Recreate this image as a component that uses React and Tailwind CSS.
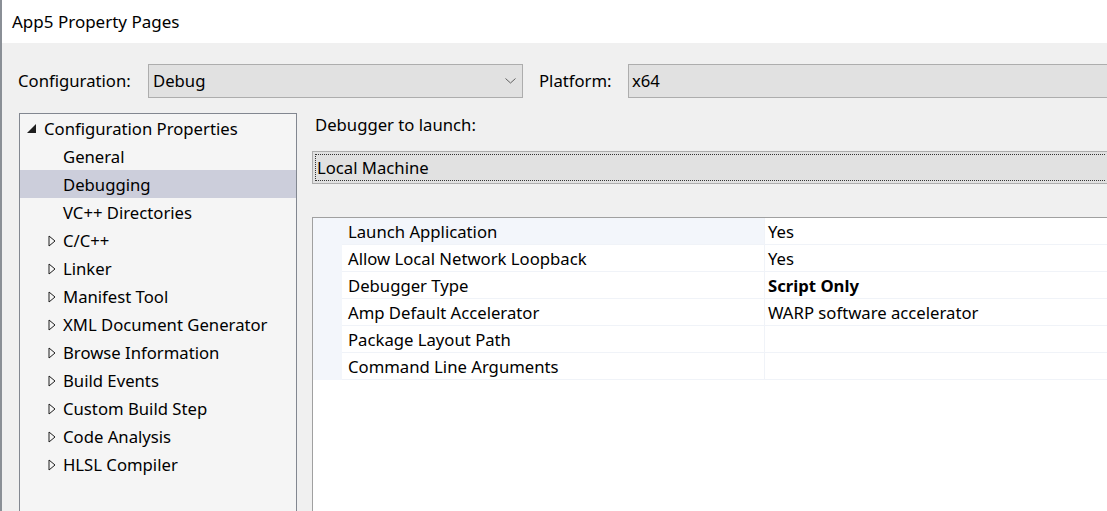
import React from "react";

const treeChildren = [
  { label: "General", leaf: true },
  { label: "Debugging", leaf: true, selected: true },
  { label: "VC++ Directories", leaf: true },
  { label: "C/C++" },
  { label: "Linker" },
  { label: "Manifest Tool" },
  { label: "XML Document Generator" },
  { label: "Browse Information" },
  { label: "Build Events" },
  { label: "Custom Build Step" },
  { label: "Code Analysis" },
  { label: "HLSL Compiler" },
];

const props = [
  { name: "Launch Application", value: "Yes", active: true },
  { name: "Allow Local Network Loopback", value: "Yes" },
  { name: "Debugger Type", value: "Script Only", bold: true },
  { name: "Amp Default Accelerator", value: "WARP software accelerator" },
  { name: "Package Layout Path", value: "" },
  { name: "Command Line Arguments", value: "" },
];

const Chevron = () => (
  <svg width="11" height="6" viewBox="0 0 11 6" className="mr-[6px]">
    <path d="M0.5 0.5 L5.5 5 L10.5 0.5" fill="none" stroke="#606060" strokeWidth="1" />
  </svg>
);

const OpenTriangle = () => (
  <svg width="9" height="9" viewBox="0 0 9 9">
    <path d="M9 0 L9 9 L0 9 Z" fill="#1e1e1e" />
  </svg>
);

const ClosedTriangle = () => (
  <svg width="8" height="12" viewBox="0 0 8 12">
    <path d="M1 1 L7 6 L1 11 Z" fill="none" stroke="#1e1e1e" strokeWidth="1" />
  </svg>
);

export default function App() {
  return (
    <div
      className="w-[1107px] h-[511px] overflow-hidden bg-[#f0f0f0] border-l-2 border-[#8a8f96] text-[16.7px] text-black flex flex-col"
      style={{ fontFamily: '"Noto Sans", "Open Sans", sans-serif' }}
    >
      <div className="h-[43px] shrink-0 bg-white flex items-center pl-[10px] text-[17px]">
        App5 Property Pages
      </div>

      <div className="mt-[21px] h-[34px] shrink-0 flex items-center">
        <span className="w-[146px] pl-[16px]">Configuration:</span>
        <div className="w-[375px] h-[34px] bg-[#e1e1e1] border border-[#adadad] flex items-center justify-between pl-[4px]">
          <span>Debug</span>
          <Chevron />
        </div>
        <span className="w-[105px] pl-[16px]">Platform:</span>
        <div className="flex-1 h-[34px] bg-[#e1e1e1] border border-[#adadad] border-r-0 flex items-center pl-[3px]">
          x64
        </div>
      </div>

      <div className="mt-[15px] flex-1 flex min-h-0">
        <div className="ml-[17px] w-[278px] bg-[#f5f5f5] border border-[#828790] border-b-0">
          <div className="h-[28px] flex items-center">
            <span className="w-[24px] flex justify-end pr-[8px] pt-[1px]">
              <OpenTriangle />
            </span>
            <span className="pt-[2px]">Configuration Properties</span>
          </div>
          {treeChildren.map((c) => (
            <div
              key={c.label}
              className={`h-[28px] flex items-center ${c.selected ? "bg-[#cccedb]" : ""}`}
            >
              <span className="w-[43px] flex justify-end pr-[7px] pt-[1px]">
                {!c.leaf && <ClosedTriangle />}
              </span>
              <span className="pt-[2px]">{c.label}</span>
            </div>
          ))}
        </div>

        <div className="ml-[15px] flex-1 flex flex-col min-w-0">
          <div className="h-[24px] flex items-center pl-[3px]">Debugger to launch:</div>
          <div className="mt-[14px] h-[33px] bg-[#e1e1e1] border border-[#adadad] border-r-0 p-[2px]">
            <div className="h-full border border-dotted border-[#333] border-r-0 flex items-center pl-[1px]">
              Local Machine
            </div>
          </div>

          <div className="mt-[33px] flex-1 bg-white border-t border-l border-[#a0a0a0]">
            {props.map((p) => (
              <div key={p.name} className="h-[27px] flex">
                <div className="w-[29px] bg-[#f3f6fb]" />
                <div
                  className={`w-[422px] flex items-center pl-[6px] pt-[1px] border-b border-[#f0f3f8] ${
                    p.active ? "bg-[#f3f6fb]" : ""
                  }`}
                >
                  {p.name}
                </div>
                <div className="w-[1px] bg-[#f0f3f8]" />
                <div
                  className={`flex-1 flex items-center pl-[3px] pt-[1px] border-b border-[#f0f3f8] ${
                    p.bold ? "font-bold" : ""
                  }`}
                >
                  {p.value}
                </div>
              </div>
            ))}
          </div>
        </div>
      </div>
    </div>
  );
}
